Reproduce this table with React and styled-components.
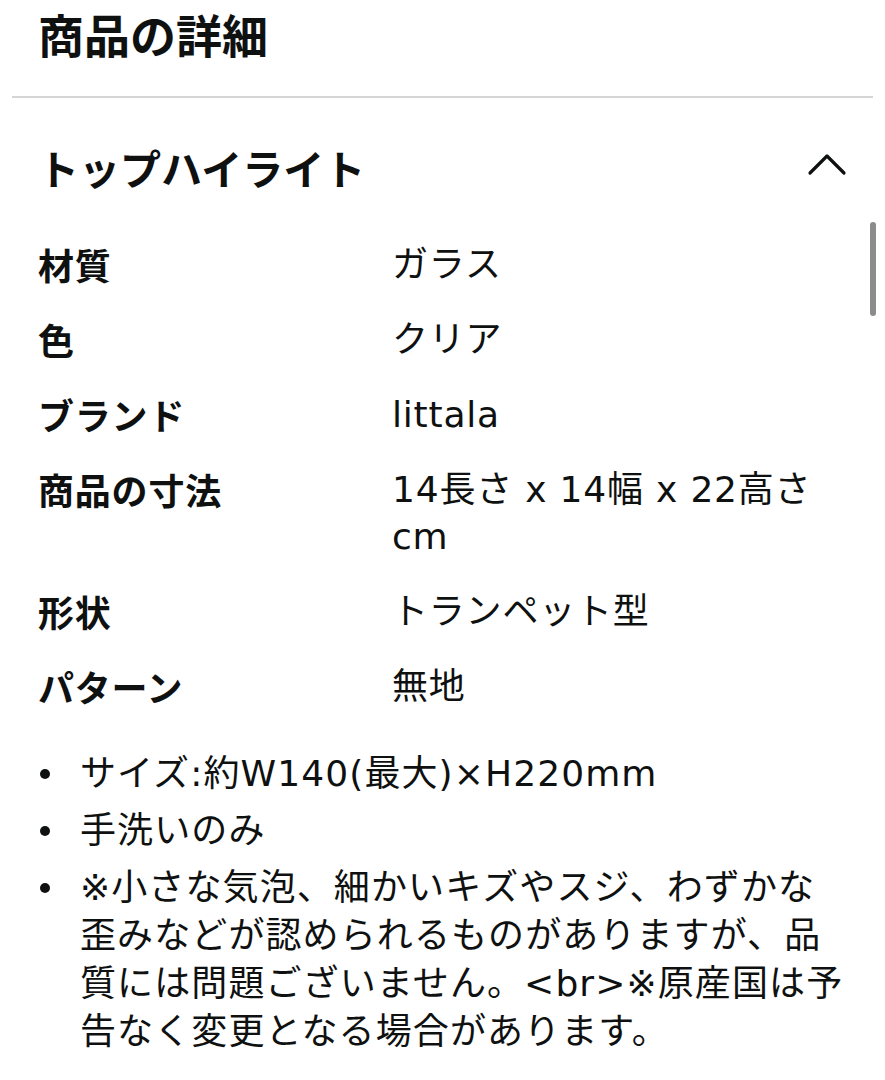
import React from "react";
import styled, { createGlobalStyle } from "styled-components";

const GlobalStyle = createGlobalStyle`
    body {
        margin: 0;
        background: #fff;
        color: #0f1111;
        font-family: "DejaVu Sans", "Noto Sans CJK JP", sans-serif;
    }
`;

const Page = styled.div`
    position: relative;
    padding: 0 12px;
`;

const Title = styled.h1`
    margin: 0;
    padding: 0 26px;
    height: 96px;
    line-height: 66px;
    font-family: "Noto Sans CJK JP", sans-serif;
    font-size: 46px;
    font-weight: 700;
    border-bottom: 2px solid #d5d5d5;
`;

const Section = styled.section`
    padding: 0 26px;
`;

const SectionHeader = styled.div`
    display: flex;
    align-items: center;
    justify-content: space-between;
    margin-top: 40px;
    height: 58px;
`;

const SectionTitle = styled.h2`
    margin: 0;
    font-family: "Noto Sans CJK JP", sans-serif;
    font-size: 41px;
    font-weight: 700;
    line-height: 58px;
`;

const Chevron = styled.svg`
    width: 40px;
    height: 24px;
    margin-top: -6px;
`;

const SpecTable = styled.dl`
    display: grid;
    grid-template-columns: 354px 1fr;
    row-gap: 28px;
    margin: 45px 0 0;
    font-size: 36px;
    line-height: 47px;
    letter-spacing: 0.8px;
`;

const Label = styled.dt`
    font-family: "Noto Sans CJK JP", sans-serif;
    font-weight: 700;
`;

const Value = styled.dd`
    margin: 0;
    font-weight: 400;
`;

const Bullets = styled.ul`
    list-style: none;
    margin: 40px 0 0;
    padding: 0;
    display: flex;
    flex-direction: column;
    gap: 9px;
    font-size: 36px;
    line-height: 48px;
    letter-spacing: 1.1px;
`;

const Bullet = styled.li`
    position: relative;
    padding-left: 42px;
    white-space: pre-line;

    &::before {
        content: "";
        position: absolute;
        left: 2px;
        top: 19px;
        width: 10px;
        height: 10px;
        border-radius: 50%;
        background: #0f1111;
    }
`;

const ScrollThumb = styled.div`
    position: absolute;
    right: 9px;
    top: 222px;
    width: 6px;
    height: 94px;
    border-radius: 3px;
    background: #8c8c8c;
`;

const specs = [
    ["材質", "ガラス"],
    ["色", "クリア"],
    ["ブランド", "littala"],
    ["商品の寸法", "14長さ x 14幅 x 22高さ cm"],
    ["形状", "トランペット型"],
    ["パターン", "無地"],
];

const notes = [
    "サイズ:約W140(最大)×H220mm",
    "手洗いのみ",
    "※小さな気泡、細かいキズやスジ、わずかな\n歪みなどが認められるものがありますが、品\n質には問題ございません。<br>※原産国は予\n告なく変更となる場合があります。",
];

export default function App() {
    return (
        <Page>
            <GlobalStyle />
            <Title>商品の詳細</Title>
            <Section>
                <SectionHeader>
                    <SectionTitle>トップハイライト</SectionTitle>
                    <Chevron viewBox="0 0 40 24" fill="none">
                        <path
                            d="M3 21 L20 4 L37 21"
                            stroke="#0f1111"
                            strokeWidth="3.2"
                            strokeLinecap="round"
                            strokeLinejoin="round"
                        />
                    </Chevron>
                </SectionHeader>
                <SpecTable>
                    {specs.map(([label, value]) => (
                        <React.Fragment key={label}>
                            <Label>{label}</Label>
                            <Value>{value}</Value>
                        </React.Fragment>
                    ))}
                </SpecTable>
                <Bullets>
                    {notes.map((note) => (
                        <Bullet key={note}>{note}</Bullet>
                    ))}
                </Bullets>
            </Section>
            <ScrollThumb />
        </Page>
    );
}
